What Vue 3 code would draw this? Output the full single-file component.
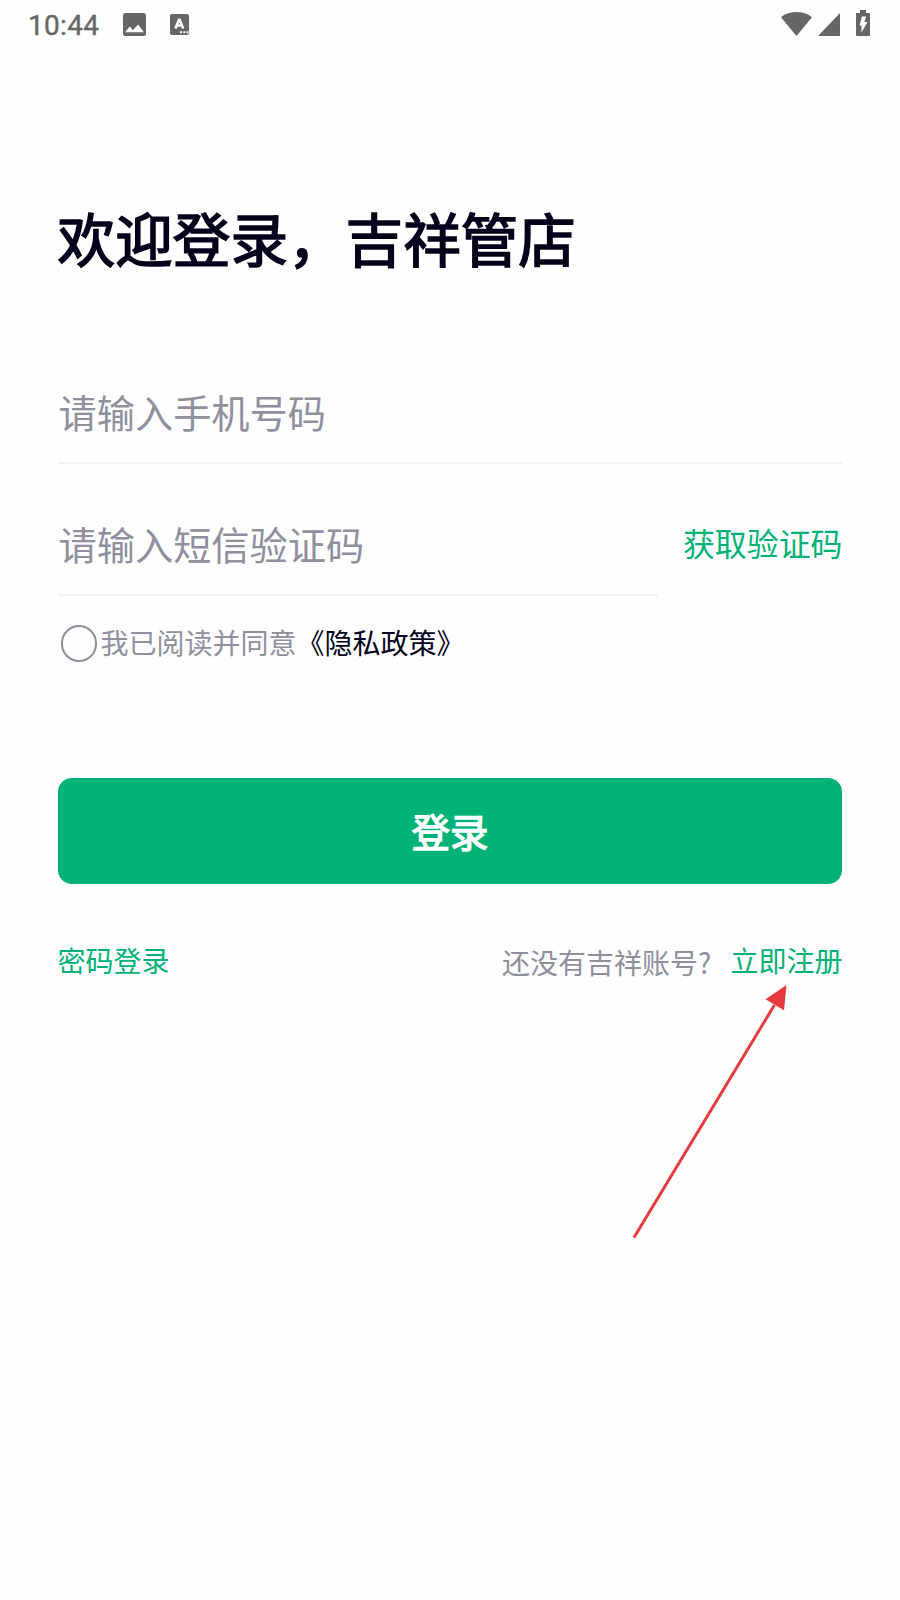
<script setup>
import { ref } from 'vue'

const phone = ref('')
const code = ref('')
const agree = ref(false)

function login() {
  if (!agree.value) return
  console.log(phone.value, code.value)
}
</script>

<template>
  <main class="page">
    <header class="status">
      <span class="time">10:44</span>
      <svg class="picture" width="23" height="23" viewBox="0 0 22 22">
        <rect width="22" height="22" rx="2.5" fill="#666" />
        <path d="M2 18.5 6.500 13l3 3.500L14.500 11l5.500 7.500z" fill="#fff" />
      </svg>
      <svg class="letter" width="19" height="21" viewBox="0 0 19 21">
        <rect width="19" height="21" rx="2" fill="#666" />
        <path d="M5.400 14.500 9.300 5 13.200 14.500M6.800 11.500h5" fill="none" stroke="#fff" stroke-width="2.500" stroke-linejoin="bevel" />
        <path d="M10 17.200h2v2h-2zM13.300 17.200h2v2h-2zM16.500 17.200h2v2h-2z" fill="#fff" />
      </svg>
      <span class="space"></span>
      <svg width="31" height="24" viewBox="0 0 31 24">
        <path d="M0 5.200C8.500-1.600 22.500-1.600 31 5.200L15.500 24z" fill="#666" />
      </svg>
      <svg class="signal" width="22" height="23" viewBox="0 0 22 23">
        <path d="M22 0v23H0z" fill="#666" />
      </svg>
      <svg class="battery" width="14" height="26" viewBox="0 0 14 26">
        <path d="M4 0h6v3h3q1 0 1 1v21q0 1-1 1H1q-1 0-1-1V4q0-1 1-1h3z" fill="#666" />
        <path d="M6 6.500h4L8.500 12H11.500L5.500 22.500V15.500H3.500z" fill="#fff" />
      </svg>
    </header>

    <form class="content" @submit.prevent="login">
      <h1>欢迎登录，吉祥管店</h1>
      <input v-model="phone" type="text" placeholder="请输入手机号码" />
      <div class="row">
        <input v-model="code" type="text" placeholder="请输入短信验证码" />
        <button class="getCode" type="button">获取验证码</button>
      </div>
      <label class="agree">
        <input v-model="agree" type="checkbox" />
        <span>我已阅读并同意</span>
        <a class="policy">《隐私政策》</a>
      </label>
      <button class="login" type="submit">登录</button>
      <div class="links">
        <a>密码登录</a>
        <span class="noAccount">还没有吉祥账号?</span>
        <a>立即注册</a>
      </div>
    </form>

    <!-- flecha hacia el registro -->
    <svg class="arrow" width="160" height="260" viewBox="0 0 160 260">
      <path d="M4 252.500 144.500 20" stroke="#e23c40" stroke-width="3" />
      <path d="M156.500 0 154 25.200 135.500 14.300z" fill="#e73a3e" />
    </svg>
  </main>
</template>

<style>
body {
  margin: 0;
  background-color: #fefefe;
}
</style>

<style scoped>
.page {
  position: relative;
  width: 900px;
  height: 1600px;
  overflow: hidden;
  background-color: #fefefe;
  font-family: 'Noto Sans CJK SC', sans-serif;
}

.status {
  display: flex;
  align-items: center;
  box-sizing: border-box;
  height: 48px;
  padding: 0 30px 0 28px;
}
.time {
  width: 95px;
  padding-top: 3px;
  color: #666;
  font: 28px/32px Roboto, sans-serif;
  letter-spacing: 0.3px;
  -webkit-text-stroke: 0.4px #666;
}
.letter {
  margin-left: 24px;
}
.space {
  flex: 1;
}
.signal {
  margin: 1px 16px 0 6px;
}
.battery {
  margin-bottom: 2px;
}

.content {
  padding: 149px 57.6px 0;
}
/* trazo extra en vez de la negrita, queda menos pesado */
h1 {
  margin: 0;
  color: #03021a;
  font-size: 57.6px;
  line-height: 80px;
  font-weight: 400;
  -webkit-text-stroke: 1.6px #03021a;
}
input {
  display: block;
  box-sizing: border-box;
  width: 100%;
  height: 105px;
  margin-top: 82px;
  padding: 2px 1px 0;
  border: 0;
  border-bottom: 2px solid #f2f2f3;
  background: none;
  color: #03021a;
  font: 38.2px 'Noto Sans CJK SC', sans-serif;
}
input::placeholder {
  color: #8f8f9d;
  opacity: 1;
}
button {
  border: 0;
  background: none;
  cursor: pointer;
  font-family: inherit;
}

.row {
  display: flex;
  align-items: center;
  justify-content: space-between;
  margin-top: 27px;
}
.row input {
  width: 600px;
  margin: 0;
}
.getCode {
  padding: 0 0 4px;
  color: #00b277;
  font-size: 31.9px;
}

.agree {
  display: flex;
  align-items: center;
  height: 40px;
  margin-top: 26px;
  padding-left: 3px;
  color: #8f8f9d;
  font-size: 28px;
  line-height: 40px;
}
.agree input {
  appearance: none;
  width: 36.5px;
  height: 36.5px;
  margin: 3px 3.5px 0 0;
  padding: 0;
  border: 2.6px solid #8f8f9d;
  border-radius: 50%;
}
.policy {
  color: #03021a;
}

.login {
  display: block;
  width: 100%;
  height: 105.6px;
  margin-top: 116px;
  padding: 0 0 2px;
  border-radius: 14px;
  background-color: #00b277;
  color: #fff;
  font-size: 38.4px;
  font-weight: 400;
  -webkit-text-stroke: 1.3px #fff;
}

.links {
  display: flex;
  margin-top: 56px;
  color: #00b277;
  font-size: 28px;
  line-height: 40px;
}
.noAccount {
  margin: 2px 19px 0 auto;
  color: #8f8f9d;
}

.arrow {
  position: absolute;
  left: 630px;
  top: 985px;
}
</style>
